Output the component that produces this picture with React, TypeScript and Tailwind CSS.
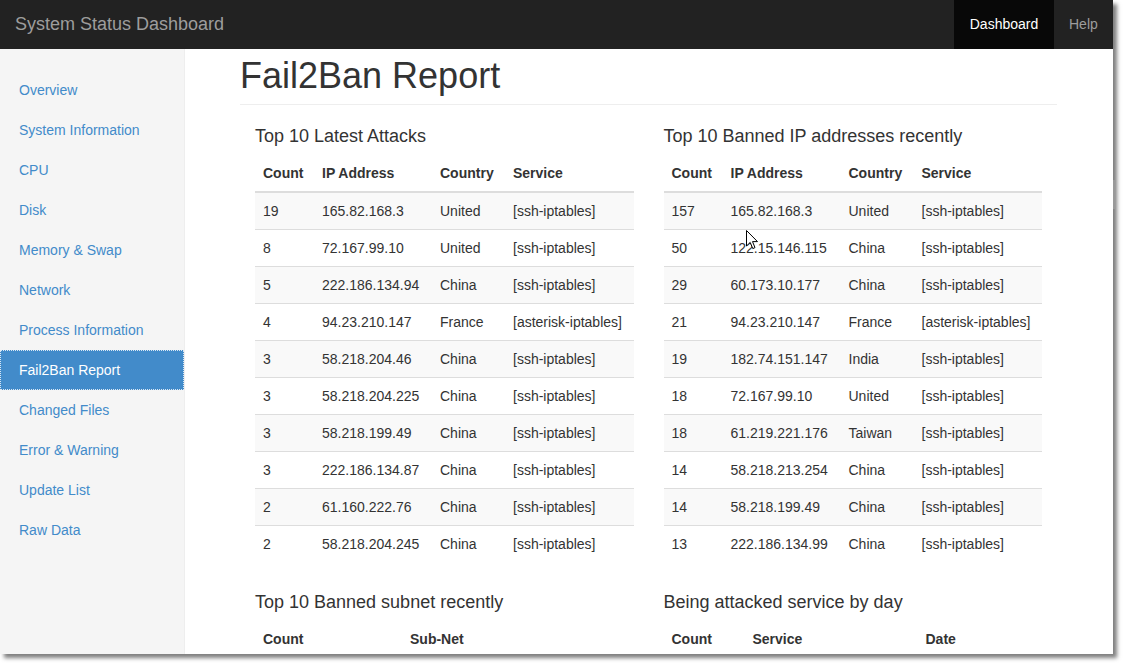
import React from "react";

type Row = [string, string, string, string];

const latestAttacks: Row[] = [
  ["19", "165.82.168.3", "United", "[ssh-iptables]"],
  ["8", "72.167.99.10", "United", "[ssh-iptables]"],
  ["5", "222.186.134.94", "China", "[ssh-iptables]"],
  ["4", "94.23.210.147", "France", "[asterisk-iptables]"],
  ["3", "58.218.204.46", "China", "[ssh-iptables]"],
  ["3", "58.218.204.225", "China", "[ssh-iptables]"],
  ["3", "58.218.199.49", "China", "[ssh-iptables]"],
  ["3", "222.186.134.87", "China", "[ssh-iptables]"],
  ["2", "61.160.222.76", "China", "[ssh-iptables]"],
  ["2", "58.218.204.245", "China", "[ssh-iptables]"],
];

const bannedIps: Row[] = [
  ["157", "165.82.168.3", "United", "[ssh-iptables]"],
  ["50", "122.15.146.115", "China", "[ssh-iptables]"],
  ["29", "60.173.10.177", "China", "[ssh-iptables]"],
  ["21", "94.23.210.147", "France", "[asterisk-iptables]"],
  ["19", "182.74.151.147", "India", "[ssh-iptables]"],
  ["18", "72.167.99.10", "United", "[ssh-iptables]"],
  ["18", "61.219.221.176", "Taiwan", "[ssh-iptables]"],
  ["14", "58.218.213.254", "China", "[ssh-iptables]"],
  ["14", "58.218.199.49", "China", "[ssh-iptables]"],
  ["13", "222.186.134.99", "China", "[ssh-iptables]"],
];

const navItems = [
  "Overview",
  "System Information",
  "CPU",
  "Disk",
  "Memory & Swap",
  "Network",
  "Process Information",
  "Fail2Ban Report",
  "Changed Files",
  "Error & Warning",
  "Update List",
  "Raw Data",
];

function IpTable({ rows }: { rows: Row[] }) {
  return (
    <table className="w-full table-fixed border-collapse text-[14px] leading-[20px] text-[#333]">
      <colgroup>
        <col className="w-[59px]" />
        <col className="w-[118px]" />
        <col className="w-[73px]" />
        <col />
      </colgroup>
      <thead>
        <tr>
          {["Count", "IP Address", "Country", "Service"].map((h) => (
            <th key={h} className="border-b-2 border-[#ddd] p-2 text-left font-bold whitespace-nowrap">
              {h}
            </th>
          ))}
        </tr>
      </thead>
      <tbody>
        {rows.map((r, i) => (
          <tr key={i} className={i % 2 === 0 ? "bg-[#f9f9f9]" : ""}>
            {r.map((c, j) => (
              <td key={j} className="border-t border-[#ddd] p-2 whitespace-nowrap">
                {c}
              </td>
            ))}
          </tr>
        ))}
      </tbody>
    </table>
  );
}

export default function App() {
  return (
    <div className="relative h-[663px] w-[1123px] overflow-hidden bg-white font-['Liberation_Sans',Arial,sans-serif]">
      {/* the captured window */}
      <div className="flex h-[654px] w-[1113px] flex-col overflow-hidden bg-white shadow-[4px_4px_4px_rgba(0,0,0,0.5)]">
        {/* top navbar */}
        <div className="flex h-[49px] shrink-0 items-stretch bg-[#222]">
          <div className="flex flex-1 items-center pl-[15px] text-[18px] text-[#9d9d9d]">System Status Dashboard</div>
          <div className="flex w-[100px] items-center justify-center bg-[#080808] text-[14px] text-white">Dashboard</div>
          <div className="flex w-[59px] items-center pl-[15px] text-[14px] text-[#9d9d9d]">Help</div>
        </div>

        <div className="flex min-h-0 flex-1">
          {/* sidebar */}
          <div className="w-[185px] shrink-0 border-r border-[#eee] bg-[#f5f5f5] pt-[21px]">
            {navItems.map((item) =>
              item === "Fail2Ban Report" ? (
                <div
                  key={item}
                  className="flex h-[40px] items-center bg-[#428bca] pl-[19px] text-[14px] text-white outline-1 -outline-offset-1 outline-dotted outline-white/80"
                >
                  {item}
                </div>
              ) : (
                <div key={item} className="flex h-[40px] items-center pl-[19px] text-[14px] text-[#428bca]">
                  {item}
                </div>
              )
            )}
          </div>

          {/* main */}
          <div className="min-w-0 flex-1 pl-[55px] pr-[56px] pt-[7px]">
            <h1 className="border-b border-[#eee] pb-[8px] text-[36px] leading-[40px] font-medium text-[#333]">Fail2Ban Report</h1>

            <div className="mt-[21px] grid grid-cols-2">
              <div className="px-[15px]">
                <h4 className="mb-[9px] text-[18px] leading-[20px] text-[#333]">Top 10 Latest Attacks</h4>
                <IpTable rows={latestAttacks} />
              </div>
              <div className="px-[15px]">
                <h4 className="mb-[9px] text-[18px] leading-[20px] text-[#333]">Top 10 Banned IP addresses recently</h4>
                <IpTable rows={bannedIps} />
              </div>
            </div>

            <div className="mt-[30px] grid grid-cols-2">
              <div className="px-[15px]">
                <h4 className="mb-[9px] text-[18px] leading-[20px] text-[#333]">Top 10 Banned subnet recently</h4>
                <table className="w-full table-fixed border-collapse text-[14px] leading-[20px] text-[#333]">
                  <colgroup>
                    <col className="w-[147px]" />
                    <col />
                  </colgroup>
                  <thead>
                    <tr>
                      <th className="border-b-2 border-[#ddd] p-2 text-left font-bold">Count</th>
                      <th className="border-b-2 border-[#ddd] p-2 text-left font-bold">Sub-Net</th>
                    </tr>
                  </thead>
                </table>
              </div>
              <div className="px-[15px]">
                <h4 className="mb-[9px] text-[18px] leading-[20px] text-[#333]">Being attacked service by day</h4>
                <table className="w-full table-fixed border-collapse text-[14px] leading-[20px] text-[#333]">
                  <colgroup>
                    <col className="w-[81px]" />
                    <col className="w-[173px]" />
                    <col />
                  </colgroup>
                  <thead>
                    <tr>
                      <th className="border-b-2 border-[#ddd] p-2 text-left font-bold">Count</th>
                      <th className="border-b-2 border-[#ddd] p-2 text-left font-bold">Service</th>
                      <th className="border-b-2 border-[#ddd] p-2 text-left font-bold">Date</th>
                    </tr>
                  </thead>
                </table>
              </div>
            </div>
          </div>
        </div>
      </div>

      {/* scrollbar hint on the window edge */}
      <div className="absolute left-[1113px] top-[180px] h-[29px] w-[2px] bg-[#999]" />

      {/* mouse pointer */}
      <svg className="absolute left-[746px] top-[230px]" width="13" height="20" viewBox="0 0 13 20" aria-hidden="true">
        <path d="M0.5 0.5 L0.5 16 L4.2 12.4 L6.8 18.6 L9 17.6 L6.5 11.6 L11.5 11.6 Z" fill="white" stroke="black" strokeWidth="1" />
      </svg>
    </div>
  );
}
